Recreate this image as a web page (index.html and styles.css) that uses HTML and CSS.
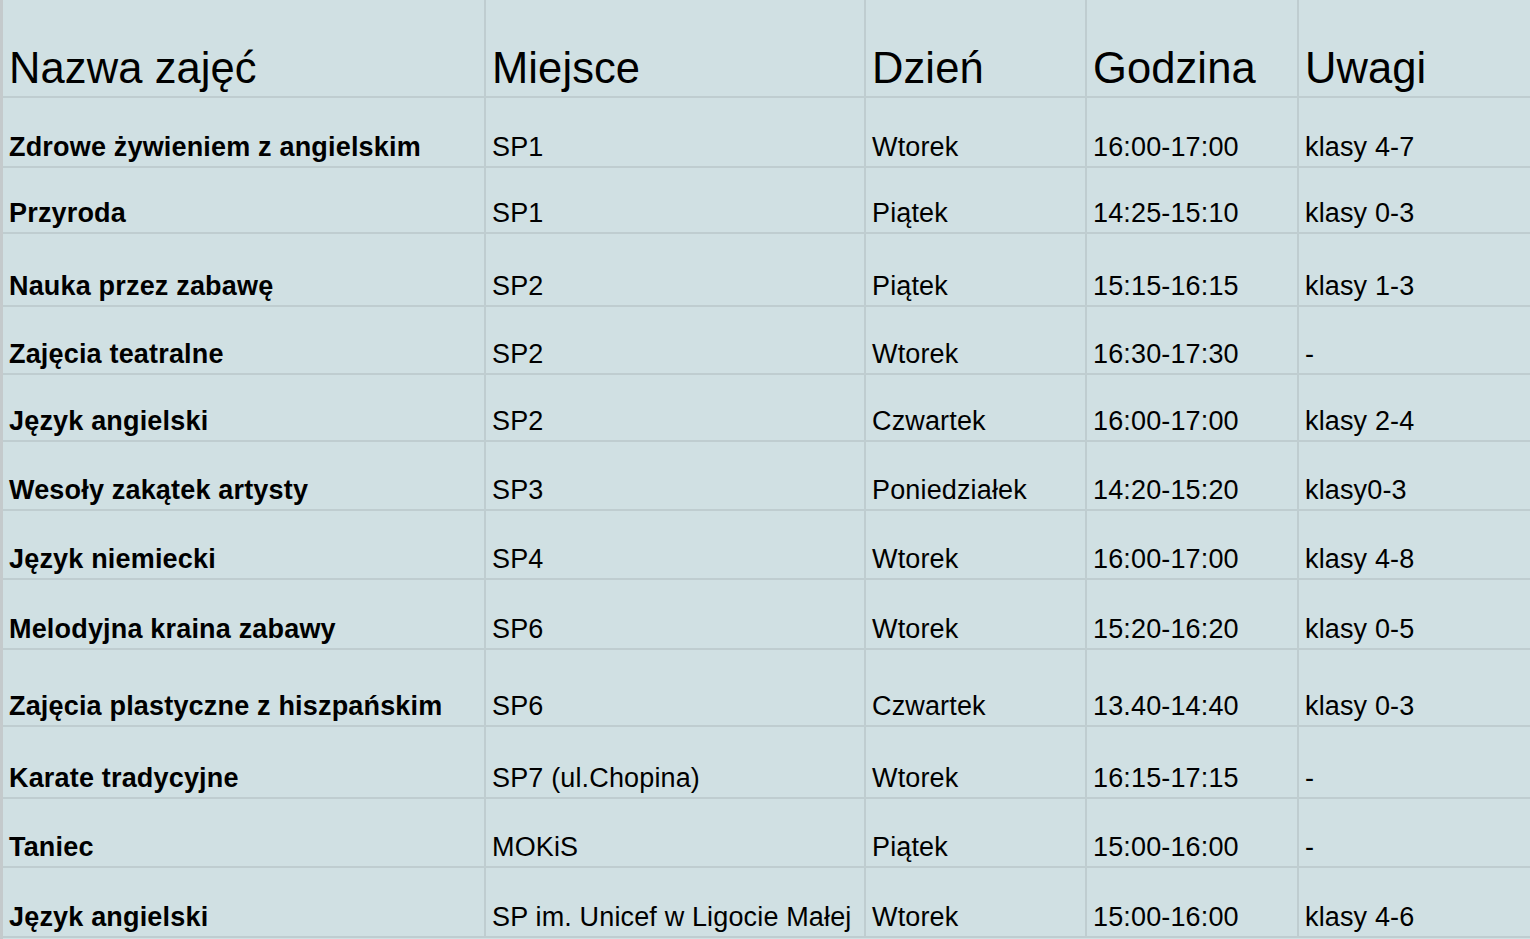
FILE: index.html
```html
<!DOCTYPE html>
<html lang="pl">
<head>
<meta charset="utf-8">
<title>Zajęcia</title>
<link rel="stylesheet" href="styles.css">
</head>
<body>
<div class="sheet">
  <div class="row head">
    <div class="cell">Nazwa zajęć</div>
    <div class="cell">Miejsce</div>
    <div class="cell">Dzień</div>
    <div class="cell">Godzina</div>
    <div class="cell">Uwagi</div>
  </div>
  <div class="row">
    <div class="cell name">Zdrowe żywieniem z angielskim</div>
    <div class="cell">SP1</div>
    <div class="cell">Wtorek</div>
    <div class="cell">16:00-17:00</div>
    <div class="cell">klasy 4-7</div>
  </div>
  <div class="row">
    <div class="cell name">Przyroda</div>
    <div class="cell">SP1</div>
    <div class="cell">Piątek</div>
    <div class="cell">14:25-15:10</div>
    <div class="cell">klasy 0-3</div>
  </div>
  <div class="row">
    <div class="cell name">Nauka przez zabawę</div>
    <div class="cell">SP2</div>
    <div class="cell">Piątek</div>
    <div class="cell">15:15-16:15</div>
    <div class="cell">klasy 1-3</div>
  </div>
  <div class="row">
    <div class="cell name">Zajęcia teatralne</div>
    <div class="cell">SP2</div>
    <div class="cell">Wtorek</div>
    <div class="cell">16:30-17:30</div>
    <div class="cell">-</div>
  </div>
  <div class="row">
    <div class="cell name">Język angielski</div>
    <div class="cell">SP2</div>
    <div class="cell">Czwartek</div>
    <div class="cell">16:00-17:00</div>
    <div class="cell">klasy 2-4</div>
  </div>
  <div class="row">
    <div class="cell name">Wesoły zakątek artysty</div>
    <div class="cell">SP3</div>
    <div class="cell">Poniedziałek</div>
    <div class="cell">14:20-15:20</div>
    <div class="cell">klasy0-3</div>
  </div>
  <div class="row">
    <div class="cell name">Język niemiecki</div>
    <div class="cell">SP4</div>
    <div class="cell">Wtorek</div>
    <div class="cell">16:00-17:00</div>
    <div class="cell">klasy 4-8</div>
  </div>
  <div class="row">
    <div class="cell name">Melodyjna kraina zabawy</div>
    <div class="cell">SP6</div>
    <div class="cell">Wtorek</div>
    <div class="cell">15:20-16:20</div>
    <div class="cell">klasy 0-5</div>
  </div>
  <div class="row">
    <div class="cell name">Zajęcia plastyczne z hiszpańskim</div>
    <div class="cell">SP6</div>
    <div class="cell">Czwartek</div>
    <div class="cell">13.40-14:40</div>
    <div class="cell">klasy 0-3</div>
  </div>
  <div class="row">
    <div class="cell name">Karate tradycyjne</div>
    <div class="cell">SP7 (ul.Chopina)</div>
    <div class="cell">Wtorek</div>
    <div class="cell">16:15-17:15</div>
    <div class="cell">-</div>
  </div>
  <div class="row">
    <div class="cell name">Taniec</div>
    <div class="cell">MOKiS</div>
    <div class="cell">Piątek</div>
    <div class="cell">15:00-16:00</div>
    <div class="cell">-</div>
  </div>
  <div class="row">
    <div class="cell name">Język angielski</div>
    <div class="cell">SP im. Unicef w Ligocie Małej</div>
    <div class="cell">Wtorek</div>
    <div class="cell">15:00-16:00</div>
    <div class="cell">klasy 4-6</div>
  </div>
</div>
</body>
</html>
```

FILE: styles.css
```css
html, body {
  margin: 0;
  padding: 0;
  background: #d0e0e3;
  overflow: hidden;
}

body {
  font-family: "Liberation Sans", Arial, sans-serif;
  color: #000;
}

.sheet {
  display: grid;
  grid-template-columns: 483px 380px 221px 212px 1fr;
  grid-template-rows: 98px 70px 66px 73px 68px 67px 69px 69px 70px 77px 72px 69px 70px;
  border-left: 3px solid #c4cacc;
  height: 939px;
  box-sizing: border-box;
}

.row {
  display: contents;
}

.cell {
  box-sizing: border-box;
  display: flex;
  align-items: flex-end;
  white-space: nowrap;
  border-right: 2px solid #bfcdd0;
  border-bottom: 2px solid #bfcdd0;
  padding: 0 4px 3px 6px;
  font-size: 27px;
  line-height: 31px;
  letter-spacing: 0.15px;
  overflow: visible;
}

.row .cell:last-child {
  border-right: none;
}

.head .cell {
  font-size: 43.5px;
  line-height: 50px;
  letter-spacing: 0.1px;
  padding-bottom: 3px;
}

.cell.name {
  font-weight: bold;
  letter-spacing: 0.18px;
}
```
